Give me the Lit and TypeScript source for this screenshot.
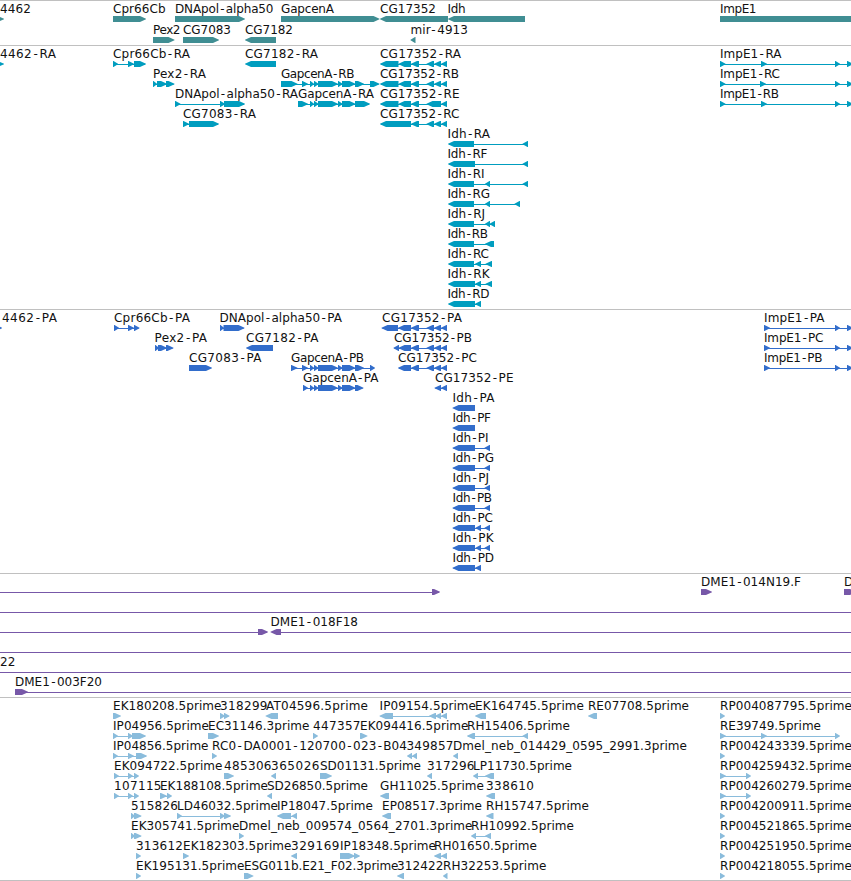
import { LitElement, html, svg, css } from "lit";
import { customElement, property } from "lit/decorators.js";

// One feature: "label|x|label end|strand|exon ranges|extra intron range".
// Exon ranges are "from:to", separated by commas.
type Row = string[];
interface TrackData { kind: string; rows: Row[]; }

const CG_TAIL = "411:419,426.5:434,434:441,441:447";
const GAP_MID = "310:314,314:318.5,318:338,338:342.5,342:355.5";

const idh = (prefix: string, x: number, list: [string, number, string][]): Row[] =>
  list.map(([n, end, exons]) => [`Idh-${prefix}${n}|${x}|${end}|-|${exons}`]);

const TRACKS: TrackData[] = [
  { kind: "gene", rows: [
    ["4462|0|31|+|-5:4", "Cpr66Cb|113|165.5|+|113:146", "DNApol-alpha50|175|273.5|+|175:245",
     "GapcenA|281|334|+|281:379.5", "CG17352|380|436|-|380:448", "Idh|447.5|465.5|-|448:525", "ImpE1|720|756.5|+|720:870"],
    ["Pex2|153|180.5|+|153:174.5", "CG7083|183|231|+|183:219", "CG7182|245|293|-|245:276", "mir-4913|410.5|468|-|410.5:415.5"],
  ] },
  { kind: "transcript", rows: [
    ["4462-RA|0|56|+|-5:4", "Cpr66Cb-RA|113|190|+|113:118,128:134,134:146", "CG7182-RA|245|318|-|245:276",
     `CG17352-RA|380|461|-|380:398.5,398.5:411,${CG_TAIL}`, "ImpE1-RA|720|781.5|+|720:725.5,761:767,835:840,847:853"],
    ["Pex2-RA|153|206|+|153:157,157:167,166:174.5", `GapcenA-RB|281|354.5|+|281:297.5,302:308,${GAP_MID},355:364,370:379.5`,
     `CG17352-RB|380|459|-|380:398.5,398.5:411,${CG_TAIL}`, "ImpE1-RC|720|780|+|720:725.5,760:766,835:840,847:853"],
    ["DNApol-alpha50-RA|175|298|+|175:180.5,220:225,224:245", `GapcenA-RA|298|374|+|298:308,${GAP_MID},355:370`,
     "CG17352-RE|380|459.5|-|380:398.5,398.5:411,411:419,426.5:441,441:447", "ImpE1-RB|720|779|+|720:725.5,761:767,835:840,847:853"],
    ["CG7083-RA|183|256|+|183:189,189:219", `CG17352-RC|380|459.5|-|380:411,${CG_TAIL}`],
    ...idh("R", 447.5, [
      ["A", 490, "448:474,522.5:528"], ["F", 487.5, "448:475,522.5:528"], ["I", 484.5, "448:474,485:490,522.5:528"],
      ["G", 490, "448:474,485:490,514.5:520"], ["J", 485, "448:474,485:490,489.5:495"], ["B", 488, "448:474,485:494"],
      ["C", 489, "448:474,475:481,485.5:492"], ["K", 489.5, "448:475,475:481,485.5:492"], ["D", 489.5, "448:475,475:481"],
    ]),
  ] },
  { kind: "protein", rows: [
    ["4462-PA|2|57|+|-5:2", "Cpr66Cb-PA|114|190|+|114:119,128:134,134:139.5", "DNApol-alpha50-PA|219.5|342|+|220:224,223.5:244.5",
     `CG17352-PA|382|462|-|381.5:398,398:411,${CG_TAIL}`, "ImpE1-PA|764|824.5|+|764:770,835:840,847:853"],
    ["Pex2-PA|154.5|207|+|155:159,158:167,166:173.5", "CG7182-PA|246|318.5|-|246:273",
     `CG17352-PB|394|472|-|393.5:399,398.5:411,${CG_TAIL}`, "ImpE1-PC|764|823.5|+|764:770,835:840,847:853"],
    ["CG7083-PA|189|261.5|+|189:212", `GapcenA-PB|291|364|+|291:297.5,302:308,${GAP_MID},355:364,370:375`,
     `CG17352-PC|398|477|-|398:411,${CG_TAIL}`, "ImpE1-PB|764|822.5|+|764:770,835:840,847:853"],
    [`GapcenA-PA|303|378.5|+|303:308,${GAP_MID},355:363.5`, "CG17352-PE|435|513.5|-|434.5:441,441:447"],
    ...idh("P", 452.5, [
      ["A", 494.5, "452.5:475"], ["F", 491, "452.5:475"], ["I", 488.5, "452.5:475,484.5:490"],
      ["G", 494, "452.5:475,484.5:490"], ["J", 489, "452.5:475,484.5:490"], ["B", 492, "452.5:475,484.5:490"],
      ["C", 493, "452.5:475,475.5:481,484.5:490"], ["K", 493.5, "452.5:475,475.5:481,484.5:490"], ["D", 494, "452.5:475,475:481"],
    ]),
  ] },
  { kind: "bac", rows: [
    ["|0|0|+|432:440|-5:440", "DME1-014N19.F|701|801|+|701:712", "D|844||+|844:856"],
    ["|0|0|+||-5:860"],
    ["|0|0|+|258:268|-5:268", "DME1-018F18|270.5|358|-|270.5:281|271:860"],
    ["|0|0|+||-5:860"],
    ["22|0|15.5|+||-5:860"],
    ["DME1-003F20|15|102|+|15:28|15:860"],
  ] },
  { kind: "est", rows: [
    ["EK180208.5prime|113|221.5|+|113:121", "318299|220|267.5|+|220:225,224:229.5", "AT04596.5prime|266|368|-|265.5:278",
     "IP09154.5prime|379.5|476|-|379.5:393,429:436,435:441,441:447", "EK164745.5prime|475|584|-|475:486",
     "RE07708.5prime|588|689|-|588:597", "RP004087795.5prime|720|852|+|720:725"],
    ["IP04956.5prime|113|209|+|113:118,128:133,132:146", "EC31146.3prime|208|309.5|+|208:219", "447357|313|360.5|+|313:318",
     "EK094416.5prime|360|468.5|+|360:367.5", "RH15406.5prime|467|570|-|467:475,522.5:528", "RE39749.5prime|720|821|+|720:726,761:767,835:840"],
    ["IP04856.5prime|113|208.5|+|113:118,128:134,136:147", "RC0-DA0001-120700-023-B04|212|407|+|212:217", "349857|406.5|453.5|-|407:412,412:417",
     "Dmel_neb_014429_0595_2991.3prime|453|687|-|453:458", "RP004243339.5prime|720|852|+|720:725"],
    ["EK094722.5prime|114|222.5|+|114:119,128:133,134:139", "485306|224|271.5|+|224:234", "365026|271|319.5|-|271:276",
     "SD01131.5prime|320|421|+|320:332", "317296|427|474.5|-|427:432", "LP11730.5prime|473|572|-|473:478,485:494",
     "RP004259432.5prime|720|852|+|720:726,746:751"],
    ["107115|114|161.5|+|114:119,128:133,134:139", "EK188108.5prime|160|268|+|160:167,167:172", "SD26850.5prime|267|368|-|267:272",
     "GH11025.5prime|380|484|-|380:389", "338610|486|534|-|486:495", "RP004260279.5prime|720|852|+|720:726,746:751"],
    ["515826|131|178|+|131:135,134:141.5", "LD46032.5prime|177|278|+|177:182,220:225,224:231", "IP18047.5prime|277|373|-|277:291,291.5:297",
     "EP08517.3prime|382|482|-|382:391", "RH15747.5prime|486|589|-|486:493.5", "RP004200911.5prime|720|852|+|720:725"],
    ["EK305741.5prime|131|239.5|+|131:135,134:141.5", "Dmel_neb_009574_0564_2701.3prime|239|472.5|+|239:244",
     "RH10992.5prime|471|574|-|471:476,485:491", "RP004521865.5prime|720|852|+|720:725"],
    ["313612|136|183|+|136:141", "EK182303.5prime|183|291.5|+|183:189", "329169|291|339.5|-|291:297",
     "IP18348.5prime|340|436|+|340:355,354:360", "RH01650.5prime|434|537|-|434:441,441:447", "RP004251950.5prime|720|852|+|720:725"],
    ["EK195131.5prime|136|244.5|+|136:141", "ESG011b.E21_F02.3prime|244|398.5|+|244:253.5", "312422|397|443.5|-|397:404",
     "RH32253.5prime|443|546.5|-|443:447.5", "RP004218055.5prime|720|852|+|720:725"],
  ] },
];

const range = (s: string) => s.split(":").map(Number) as [number, number];

// Opens a little room on both sides of every hyphen.
const hyphenRoom = (label: string) =>
  [...label].map((c, i) => (c === "-" ? 1.3 : label[i - 1] === "-" ? 1.4 : 0)).join(" ");

@customElement("feature-row")
class FeatureRow extends LitElement {
  @property({ attribute: false }) items: Row = [];

  static styles = css`
    :host { display: block; height: 20px; }
    .row { display: block; width: 100%; height: 20px; overflow: visible; }
    .glyph { fill: var(--feature); }
    .label { fill: #111; font: 12px "DejaVu Sans", sans-serif; white-space: pre; }
  `;

  private exon([a, b]: [number, number], forward: boolean) {
    const h = Math.min(6.5, b - a);
    const d = forward
      ? `M${a} 14H${b - h + 0.5}L${b} 16.7V17.3L${b - h + 0.5} 20H${a}Z`
      : `M${b} 14H${a + h - 0.5}L${a} 16.7V17.3L${a + h - 0.5} 20H${b}Z`;
    return svg`<path class="glyph" d=${d}></path>`;
  }

  private feature(item: string) {
    const [label, x, end, strand, exonText, span] = item.split("|");
    const exons = exonText ? exonText.split(",").map(range) : [];
    const [from, to] = span ? range(span) : [exons[0][0], exons[exons.length - 1][1]];
    const hasIntron = span || exons.length > 1;
    const text = !label ? null : end
      ? svg`<text class="label" x=${x} y="11" dx=${hyphenRoom(label)} textLength=${+end - +x}>${label}</text>`
      : svg`<text class="label" x=${x} y="11">${label}</text>`;
    return svg`
      ${hasIntron ? svg`<rect class="glyph" x=${from + 1} y="17" width=${to - from - 2} height="1"></rect>` : null}
      ${exons.map((e) => this.exon(e, strand === "+"))}
      ${text}`;
  }

  render() {
    return html`<svg class="row">${this.items.map((i) => this.feature(i))}</svg>`;
  }
}

@customElement("app-root")
class AppRoot extends LitElement {
  static styles = css`
    :host { display: block; width: 851px; height: 881px; overflow: hidden; background: #fff; }
    .track { display: flex; flex-direction: column; padding: 1px 0 2px; border-top: 1px solid #c0c0c0; }
    .gene { --feature: #408e93; gap: 1px; }
    .transcript { --feature: #009dbf; }
    .protein { --feature: #326dcb; }
    .bac { --feature: #7758a8; }
    .est { --feature: #8abcdc; padding-bottom: 1px; border-bottom: 1px solid #c0c0c0; }
  `;

  render() {
    return html`${TRACKS.map((t) => html`
      <section class="track ${t.kind}">
        ${t.rows.map((r) => html`<feature-row .items=${r}></feature-row>`)}
      </section>`)}`;
  }
}
